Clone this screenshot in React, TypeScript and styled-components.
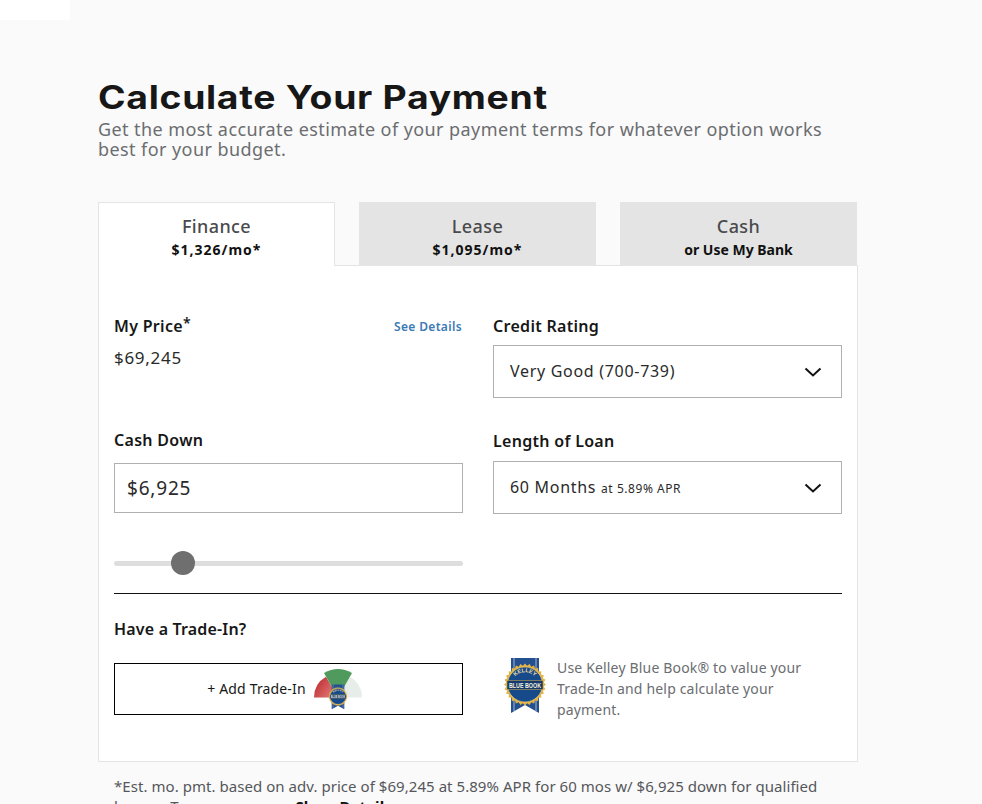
import React from 'react';
import styled, { createGlobalStyle } from 'styled-components';

const GlobalStyle = createGlobalStyle`
  html, body {
    margin: 0;
    padding: 0;
    height: 804px;
    overflow: hidden;
    background: #fafafa;
    font-family: "Noto Sans", "Open Sans", sans-serif;
    color: #151515;
  }
  * {
    box-sizing: border-box;
  }
`;

const TopPatch = styled.div`
  width: 70px;
  height: 20px;
  background: #fff;
`;

const Main = styled.main`
  width: 760px;
  margin-left: 98px;
  padding-top: 57px;
`;

const Title = styled.h1`
  margin: 0;
  font-family: Inter, "Noto Sans", sans-serif;
  font-size: 32px;
  line-height: 42px;
  font-weight: 700;
  letter-spacing: 0.6px;
  color: #171717;
  white-space: nowrap;
  transform: scaleX(1.166);
  transform-origin: left center;
`;

const Subtitle = styled.p`
  margin: 0;
  width: 740px;
  font-size: 18px;
  line-height: 20px;
  letter-spacing: 0.42px;
  color: #6b6d70;
`;

const Tabs = styled.div`
  display: flex;
  gap: 24px;
  margin-top: 43px;
  width: 760px;
`;

const Tab = styled.div<{ $active?: boolean }>`
  width: 237px;
  height: 64px;
  padding-top: ${(p) => (p.$active ? 12 : 13)}px;
  text-align: center;
  background: ${(p) => (p.$active ? '#fff' : '#e4e4e4')};
  border: ${(p) => (p.$active ? '1px solid #e4e4e4' : 'none')};
  border-bottom: none;
  position: relative;
  z-index: 1;
`;

const TabName = styled.div`
  font-size: 18px;
  line-height: 22px;
  font-weight: 500;
  letter-spacing: 0.4px;
  color: #4a4a4d;
`;

const TabSub = styled.div<{ $price?: boolean }>`
  margin-top: 3px;
  font-size: 14px;
  line-height: 20px;
  font-weight: 700;
  letter-spacing: ${(p) => (p.$price ? 1 : 0)}px;
  color: #111;
`;

const Panel = styled.section`
  margin-top: -1px;
  height: 497px;
  background: #fff;
  border: 1px solid #e4e4e4;
  padding: 48px 15px 0;
`;

const Columns = styled.div`
  display: grid;
  grid-template-columns: 349px 349px;
  column-gap: 30px;
  height: 280px;
  border-bottom: 1px solid #111;
`;

const Column = styled.div`
  display: flex;
  flex-direction: column;
`;

const LabelRow = styled.div`
  display: flex;
  justify-content: space-between;
  align-items: center;
  height: 24px;
  padding-right: 1px;
`;

const Label = styled.div`
  font-size: 16px;
  line-height: 24px;
  font-weight: 600;
  letter-spacing: 0.3px;
  color: #171717;
`;

const Star = styled.sup`
  font-size: 14px;
  line-height: 0;
  vertical-align: 4px;
`;

const DetailsLink = styled.a`
  font-size: 12px;
  font-weight: 600;
  letter-spacing: 0.35px;
  color: #3b7ab5;
`;

const PriceValue = styled.div`
  margin-top: 8px;
  margin-bottom: 58px;
  font-size: 17px;
  line-height: 24px;
  letter-spacing: 0.7px;
  color: #2a2a2a;
`;

const CashInput = styled.div`
  height: 50px;
  margin-top: 11px;
  padding-left: 12px;
  display: flex;
  align-items: center;
  border: 1px solid #b0b0b0;
  font-size: 19px;
  letter-spacing: 0.8px;
  color: #2a2a2a;
`;

const Slider = styled.div`
  position: relative;
  height: 5px;
  margin-top: 48px;
  border-radius: 3px;
  background: #dedede;
`;

const Thumb = styled.span`
  position: absolute;
  left: 57px;
  top: -10px;
  width: 24px;
  height: 24px;
  border-radius: 50%;
  background: #6f6f6f;
`;

const SelectBox = styled.div`
  height: 53px;
  display: flex;
  align-items: center;
  justify-content: space-between;
  padding: 0 19px 0 16px;
  border: 1px solid #b0b0b0;
  font-size: 16px;
  letter-spacing: 0.7px;
  color: #2a2a2a;
`;

const SelectText = styled.span`
  margin-bottom: 2px;
`;

const SelectNote = styled.span`
  font-size: 12px;
  letter-spacing: 0.55px;
`;

const RightLabel = styled(Label)<{ $gap: number; $below: number }>`
  margin-top: ${(p) => p.$gap}px;
  margin-bottom: ${(p) => p.$below}px;
`;

const TradeTitle = styled(Label)`
  margin-top: 23px;
  letter-spacing: 0.18px;
`;

const TradeRow = styled.div`
  display: grid;
  grid-template-columns: 349px 349px;
  column-gap: 30px;
  margin-top: 22px;
`;

const TradeButton = styled.div`
  height: 52px;
  display: flex;
  align-items: center;
  justify-content: center;
  gap: 8px;
  border: 1px solid #000;
  font-size: 14px;
  letter-spacing: 0.15px;
  color: #171717;
`;

const TradeLabel = styled.span`
  margin-bottom: 2px;
`;

const GaugeWrap = styled.span`
  display: flex;
  margin-right: 8px;
`;

const KbbInfo = styled.div`
  display: flex;
  gap: 11px;
  margin-top: -6px;
  margin-left: 11px;
`;

const KbbText = styled.p`
  margin: 0;
  width: 262px;
  font-size: 14px;
  line-height: 21px;
  letter-spacing: 0.17px;
  color: #6b6d70;
`;

const Disclaimer = styled.p`
  margin: 14px 0 0;
  padding-left: 16px;
  width: 734px;
  font-size: 15px;
  line-height: 20px;
  letter-spacing: 0.05px;
  color: #55575a;
`;

const ShowDetails = styled.a`
  margin-left: 10px;
  font-weight: 700;
  color: #111;
`;

function Chevron() {
  return (
    <svg width="18" height="10" viewBox="0 0 18 10" fill="none">
      <path d="M1.5 1.5 L9 8.5 L16.5 1.5" stroke="#111" strokeWidth="2" />
    </svg>
  );
}

// gold seal edge, small saw teeth round the circle
const sealPoints = Array.from({ length: 56 }, (_, i) => {
  const r = i % 2 === 0 ? 21 : 18.8;
  const a = (i / 56) * Math.PI * 2;
  return `${(21 + r * Math.cos(a)).toFixed(2)},${(27.5 + r * Math.sin(a)).toFixed(2)}`;
}).join(' ');

function KbbBadge({ size, arcId }: { size: number; arcId: string }) {
  return (
    <svg width={size} height={(size * 57) / 42} viewBox="0 0 42 57">
      <path d="M7 1 H35 V56 L21 48 L7 56 Z" fill="#24508f" />
      <path d="M9 1 H11 V55 L9 54 Z M31 1 H33 V54 L31 55 Z" fill="#c9cfd8" opacity="0.4" />
      <polygon points={sealPoints} fill="#e3b443" />
      <circle cx="21" cy="27.5" r="17.5" fill="#174a8b" />
      <circle cx="21" cy="27.5" r="17.5" fill="none" stroke="#f0d27a" strokeWidth="0.6" />
      <path id={arcId} d="M8 25 A13.5 13.5 0 0 1 34 25" fill="none" />
      <text fontSize="5.5" fontWeight="700" fill="#f2dfa0" fontFamily="Liberation Sans, sans-serif">
        <textPath href={`#${arcId}`} startOffset="50%" textAnchor="middle">
          KELLEY
        </textPath>
      </text>
      <rect x="3" y="23.5" width="36" height="9" fill="#123a70" stroke="#e3b443" strokeWidth="0.5" />
      <text
        x="21"
        y="31"
        textAnchor="middle"
        fontSize="7.5"
        fontWeight="700"
        fill="#f6f1dc"
        fontFamily="Liberation Sans, sans-serif"
        textLength="32"
        lengthAdjust="spacingAndGlyphs"
      >
        BLUE BOOK
      </text>
    </svg>
  );
}

function TradeGauge() {
  return (
    <svg width="48" height="40" viewBox="0 0 48 40">
      <defs>
        <linearGradient id="gaugeRed" x1="0" y1="0" x2="1" y2="0.6">
          <stop offset="0" stopColor="#b92226" />
          <stop offset="1" stopColor="#e27a78" />
        </linearGradient>
      </defs>
      <path d="M0 28.5 A24 24 0 0 1 48 28.5 Z" fill="#e7eee9" />
      <path d="M0 28.5 A24 24 0 0 1 12 7.7 L24 28.5 Z" fill="url(#gaugeRed)" />
      <path d="M10 4 Q24 -4 38 4 L24 28.5 Z" fill="#4f9a5c" />
      <g transform="translate(14.5 15)">
        <KbbBadge size={19} arcId="kbbArcSmall" />
      </g>
    </svg>
  );
}

export default function App() {
  return (
    <>
      <GlobalStyle />
      <TopPatch />
      <Main>
        <Title>Calculate Your Payment</Title>
        <Subtitle>
          Get the most accurate estimate of your payment terms for whatever option works best for your budget.
        </Subtitle>
        <Tabs>
          <Tab $active>
            <TabName>Finance</TabName>
            <TabSub $price>$1,326/mo*</TabSub>
          </Tab>
          <Tab>
            <TabName>Lease</TabName>
            <TabSub $price>$1,095/mo*</TabSub>
          </Tab>
          <Tab>
            <TabName>Cash</TabName>
            <TabSub>or Use My Bank</TabSub>
          </Tab>
        </Tabs>
        <Panel>
          <Columns>
            <Column>
              <LabelRow>
                <Label>
                  My Price<Star>*</Star>
                </Label>
                <DetailsLink>See Details</DetailsLink>
              </LabelRow>
              <PriceValue>$69,245</PriceValue>
              <Label>Cash Down</Label>
              <CashInput>$6,925</CashInput>
              <Slider>
                <Thumb />
              </Slider>
            </Column>
            <Column>
              <RightLabel $gap={0} $below={7}>
                Credit Rating
              </RightLabel>
              <SelectBox>
                <SelectText>Very Good (700-739)</SelectText>
                <Chevron />
              </SelectBox>
              <RightLabel $gap={31} $below={8}>
                Length of Loan
              </RightLabel>
              <SelectBox>
                <SelectText>
                  60 Months <SelectNote>at 5.89% APR</SelectNote>
                </SelectText>
                <Chevron />
              </SelectBox>
            </Column>
          </Columns>
          <TradeTitle>Have a Trade-In?</TradeTitle>
          <TradeRow>
            <TradeButton>
              <TradeLabel>+ Add Trade-In</TradeLabel>
              <GaugeWrap>
                <TradeGauge />
              </GaugeWrap>
            </TradeButton>
            <KbbInfo>
              <KbbBadge size={42} arcId="kbbArcLarge" />
              <KbbText>Use Kelley Blue Book® to value your Trade-In and help calculate your payment.</KbbText>
            </KbbInfo>
          </TradeRow>
        </Panel>
        <Disclaimer>
          *Est. mo. pmt. based on adv. price of $69,245 at 5.89% APR for 60 mos w/ $6,925 down for qualified buyers.
          Terms may vary.<ShowDetails>Show Details</ShowDetails>
        </Disclaimer>
      </Main>
    </>
  );
}
